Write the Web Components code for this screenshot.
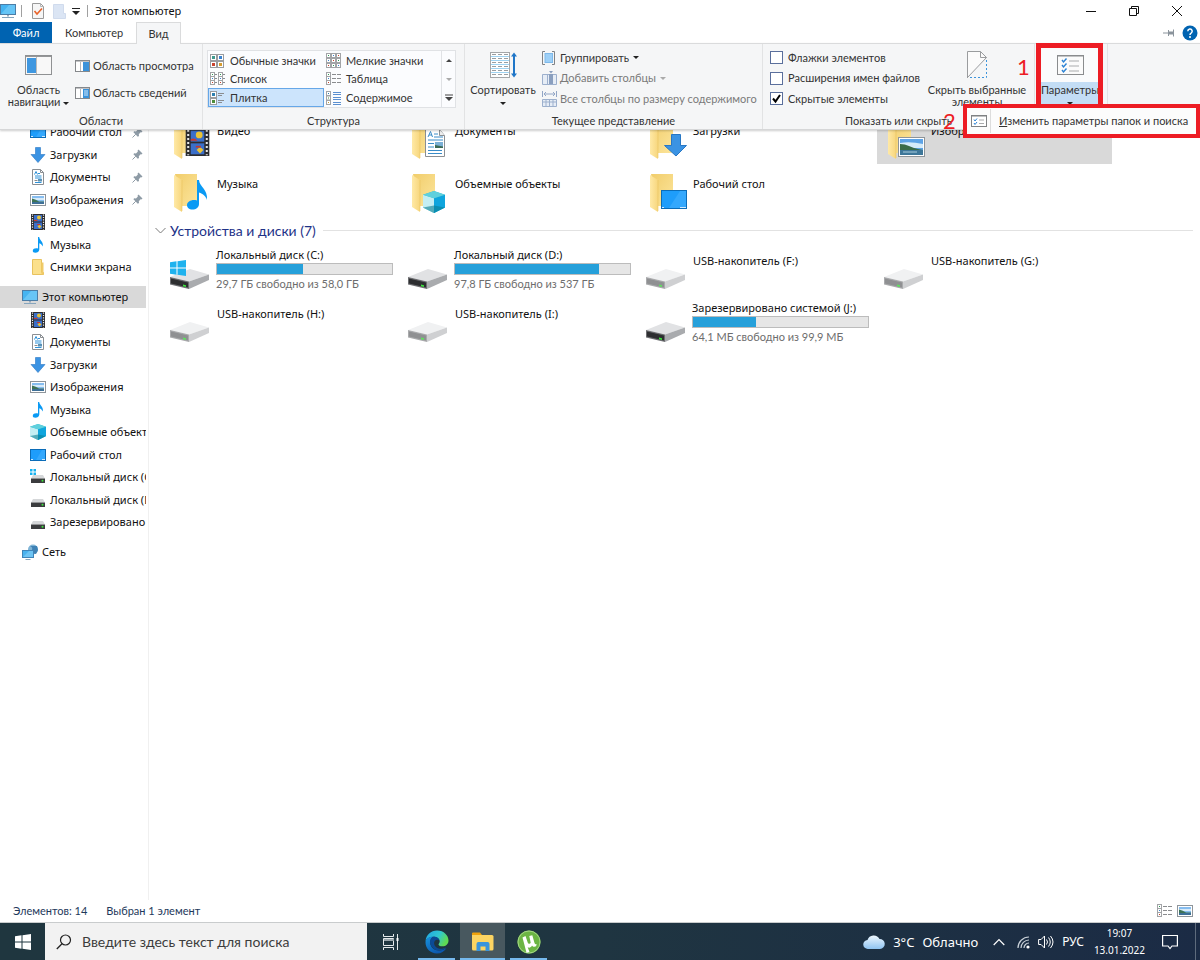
<!DOCTYPE html>
<html lang="ru">
<head>
<meta charset="utf-8">
<title>Этот компьютер</title>
<style>
html, body { margin: 0; min-height: 100%; }
body { font: 11px/16px "Noto Sans", "Open Sans", sans-serif; color: #111; background: #fff; }
</style>
</head>
<body>
<explorer-window></explorer-window>
<script>
const base = `*{box-sizing:border-box}button{font:inherit;color:inherit;border:0;background:none;padding:0;margin:0;cursor:default}a{color:inherit;text-decoration:none}`;
function define(name, css, html) {
  const t = document.createElement('template');
  customElements.define(name, class extends HTMLElement {
    constructor() {
      super();
      this.attachShadow({ mode: 'open' });
    }
    connectedCallback() {
      if (this.shadowRoot.childNodes.length) return;
      t.innerHTML = `<style>${base}${css}</style>` + (typeof html === 'function' ? html(this) : html);
      this.shadowRoot.append(t.content.cloneNode(true));
    }
  });
}

/* ---------- icons ---------- */
const folder = `<defs><linearGradient id="fb" x1="0" y1="0" x2="1" y2="1"><stop offset="0" stop-color="#f1cd6b"/><stop offset="1" stop-color="#fce59c"/></linearGradient><linearGradient id="ff" x1="0" y1="0" x2="1" y2="0"><stop offset="0" stop-color="#ffe9a6"/><stop offset="1" stop-color="#f7d67d"/></linearGradient></defs><path d="M9 9h22v30a2 2 0 0 1-2 2H14z" fill="url(#fb)"/><path d="M8 10l8 5v32L8 42z" fill="url(#ff)"/><path d="M16 15v31" stroke="#eac45f" stroke-width=".6"/>`;
const drive = (a, b, c, d, e) => `<path d="M4 33L24 25L43 30.500L23 37.500z" fill="${a}"/><path d="M23 37.500L43 30.500v5.500L23 45z" fill="${b}"/><path d="M4 33L23 37.500v7.500L4 40.500z" fill="${c}"/><path d="M5 34.500L22 38.500v5L5 39.500z" fill="${d}"/><path d="M17 40.500l3 .700v1.800l-3-.700z" fill="${e}"/>`;
const darkDrive = drive('#e1e2e4', '#a9abae', '#6c6d70', '#2d2e30', '#3be23b');
const usbDrive = drive('#f0f1f2', '#cfd0d2', '#a9aaac', '#8f9092', '#5ee35e');
const cube = `<path d="M8 0L16 2.800V12L8 16L0 12V2.800z" fill="#2fb9cf"/><path d="M0 2.800L8 5.200V16L0 12z" fill="#c4eef3"/><path d="M8 5.200L16 2.800V12L8 16z" fill="#0fa5dd"/><path d="M0 2.800L8 0l8 2.800L8 5.200z" fill="#5fd0dd"/><path d="M8 10.500l8 1.500-8 4-8-4z" fill="#087f95" opacity=".6"/>`;
const desktop = `<rect x=".5" y="2.500" width="15" height="11" fill="#1e9dfb" stroke="#0b6cb8"/><path d="M6 13L12 3h3v10z" fill="#4ab4ff" opacity=".5"/><path d="M1 12.500h2M12 12.500h3" stroke="#cfe9ff"/>`;
const photo = `<rect x=".5" y="2.500" width="15" height="11" fill="#fff" stroke="#8e959b"/><rect x="2" y="4" width="12" height="8" fill="#86bdf0"/><path d="M2 6h12v2H2z" fill="#d7ebfa"/><path d="M2 6.500q4 1 7 3h5v1H2z" fill="#3e7356"/><path d="M2 10h12v2H2z" fill="#3d6f97"/>`;
const note = `<path d="M8 0h1.200c.4 3.500 4.500 4.500 3.600 9.500C12 8 11 6.800 9.300 6.200V12.500c0 2-2 3.300-4 3.300-1.700 0-2.700-1-2.500-2.300.3-1.600 2.500-2.700 5.200-1.900z" fill="#0a9af4"/>`;
const arrow = `<path d="M5.500 .500h5v7H15L8 15.500L1 7.500h4.500z" fill="#3b93e3" stroke="#2877c4" stroke-width=".6"/>`;
const film = `<rect x="1" y="0" width="14" height="16" fill="#2c2d30"/><rect x="4" y="1" width="8" height="6.500" fill="#3b6fc9"/><rect x="4" y="8.500" width="8" height="6.500" fill="#3b6fc9"/><path d="M2.500 .500v15M13.500 .500v15" stroke="#e8e8e8" stroke-width="1.200" stroke-dasharray="1.200 1.200"/><circle cx="9" cy="3.500" r="2" fill="#eac335"/><path d="M4 6q2-1 4 1H4z" fill="#c7382f"/><path d="M7.500 12.500q2-3 4 0l-2 2z" fill="#eac335"/><path d="M7 10h3v1H7z" fill="#c7382f"/>`;
const doc = `<path d="M2.500 .500h8l3 3v12h-11z" fill="#fff" stroke="#8b8f93"/><path d="M10.500 .500v3h3" fill="none" stroke="#8b8f93"/><path d="M4.500 5.500l1.500-3 1.500 3M8 4.500h2M5 7h6.500M5 9h6.500M5 13.500h6.500" stroke="#2e92d8" fill="none"/><rect x="8" y="10" width="4" height="2.500" fill="#5b91b5"/><path d="M4.500 11.500h3" stroke="#888"/>`;
const pc = `<rect x=".5" y="1.500" width="15" height="10" fill="#45b4f1" stroke="#4c7da6"/><path d="M1 11L9 2h6v9z" fill="#7fd0fa" opacity=".6"/><path d="M7 12h2v1.500H7z" fill="#9ab"/><path d="M2 14.500h12" stroke="#86a5bd"/>`;
const windows = `<path d="M0 2.200L6.500 1.300V7.600H0zM7.500 1.200L16 0v7.600H7.500zM0 8.500h6.500v6.200L0 13.800zM7.500 8.500H16V16l-8.500-1.200z"`;
const smallDrive = (y) => `<path d="M3 ${y}h10l2 3.500H1z" fill="#d5d7d9"/><rect x="1" y="${y + 3.5}" width="14" height="4.500" fill="#3b3c3e"/><circle cx="12.500" cy="${y + 5.800}" r="1" fill="#3be23b"/>`;
const cell = (x, y, c) => `<rect x="${x + .5}" y="${y + .5}" width="6" height="6" fill="#fff" stroke="#9a9c9f"/><rect x="${x + 2}" y="${y + 2}" width="3" height="3" fill="${c}"/>`;
const tiny = (x, y, c) => `<rect x="${x + .5}" y="${y + .5}" width="4" height="4" fill="#fff" stroke="#a2a4a7"/><rect x="${x + 2}" y="${y + 2}" width="1" height="1" fill="${c}"/>`;
const placed = (s, x, y, w) => `<svg x="${x}" y="${y}" width="${w}" height="${w}" viewBox="0 0 16 16">${s}</svg>`;
const tri = (c) => `<path d="M0 1h6L3 4z" fill="${c}"/>`;
const ICONS = {
  pc: [16, 16, pc], desktop: [16, 16, desktop], photo: [16, 16, photo], note: [16, 16, note], arrow: [16, 16, arrow], film: [16, 16, film], doc: [16, 16, doc], cube: [16, 16, cube],
  folder: [16, 16, `<path d="M2.500 .500h9v13h2v2h-11z" fill="#fbe08c" stroke="#e8c25e"/><path d="M11.500 3.500h2v12h-2z" fill="#f0cb68"/>`],
  network: [16, 16, `<circle cx="11" cy="5.500" r="5" fill="#7fb4d6"/><path d="M8 2q3 1 2 4t4 4l2-4-1-4z" fill="#3f82b5"/><rect x=".5" y="6.500" width="11" height="7" fill="#49b2ee" stroke="#3f84b8"/><path d="M1 13L7 7h4v6z" fill="#86d0f8" opacity=".6"/><path d="M3.500 15.500h5" stroke="#86a5bd"/>`],
  driveC: [16, 16, `<path d="M0 0h2.500v2.500H0zM3.500 0H6v2.500H3.500zM0 3.500h2.500V6H0zM3.500 3.500H6V6H3.500z" fill="#16b1ef"/>` + smallDrive(6)],
  drive: [16, 16, smallDrive(7)],
  pin: [11, 11, `<path d="M6.500 .500L10.500 4.500L9.300 5.500L8.600 5.200L6.800 7.200L7 9L5.800 9.800L1.400 5.300L2.200 4.200L4 4.400L5.900 2.500L5.500 1.700z" fill="#8e9ba6"/><path d="M3.800 7.200L.500 10.500" stroke="#8e9ba6"/>`],
  tFilm: [48, 48, folder + placed(film, 18, 17, 27)],
  tDoc: [48, 48, folder + `<g transform="translate(1 8)"><path d="M20.500 9.500h14l5 6v21h-19z" fill="#fff" stroke="#8b8f93"/><path d="M34.500 9.500v6h5" fill="#eee" stroke="#8b8f93"/><path d="M23 17l2.500-5.500L27.500 17M24 15h3M29 14h4M29 17h9M23 20h15M23 23.500h6M23 27h6M23 30.500h14M23 33.500h14" stroke="#3a8cc8" fill="none"/><path d="M30 22h8v6h-8z" fill="#7bb0d6"/><path d="M30 28v-3l8 1.500V28z" fill="#3b6a55"/></g>`],
  tArrow: [48, 48, folder + `<path d="M29.500 22.500h9v11h6L34 44L22.500 33.500h7z" fill="#3b93e3" stroke="#2877c4"/>`],
  tPhoto: [48, 48, folder + `<g transform="translate(1 8)"><rect x="17.500" y="17.500" width="26" height="19" fill="#fff" stroke="#8e9499"/><rect x="19" y="19" width="23" height="16" fill="#5da3e6"/><path d="M19 23q10-2 23 1v4H19z" fill="#d5ebfa"/><path d="M19 24q5 0 9 2t9 3l5 1H19z" fill="#3a6b48"/><path d="M19 30h23v5H19z" fill="#3e7799"/><path d="M22 32h14" stroke="#a9cddd"/></g>`],
  tNote: [48, 48, folder + `<path d="M31 15h2c.5 7 9 9 8 20-.8-3-4-6.500-8-7.500V39c0 3.500-3 5.500-6.500 5.500S21 42.500 21 40c0-3.500 5-6 10-4.500z" fill="#0a9af4"/>`],
  tCube: [48, 48, folder + placed(cube, 19, 26, 22)],
  tDesk: [48, 48, folder + `<rect x="19.500" y="25.500" width="25" height="18" fill="#1e9dfb" stroke="#0b6cb8"/><path d="M27 43L38 26h6v17z" fill="#4ab4ff" opacity=".5"/><path d="M20 42.500h2M38 42.500h6" stroke="#cfe9ff"/>`],
  tDriveC: [48, 48, darkDrive + placed(windows + ' fill="#1eb2ee"/>', 4, 16, 16)],
  tDrive: [48, 48, darkDrive], tUsb: [48, 48, usbDrive],
  qcheck: [12, 16, `<path d="M.500 .500h8l3 3v12H.500z" fill="#f6f6f6" stroke="#9a9a9a"/><path d="M8.500 .500v3h3" fill="none" stroke="#b5b5b5"/><path d="M2.500 8l2.500 3L10 5.500" fill="none" stroke="#e8632a" stroke-width="1.600"/>`],
  qfolder: [13, 15, `<path d="M.5 .500h10v9h2v5H.5z" fill="#dbe5f4" stroke="#d0dbed"/>`],
  qmore: [8, 8, `<path d="M0 1.500h8" stroke="#222"/><path d="M0 4h8L4 8z" fill="#222"/>`],
  min: [10, 10, `<path d="M0 5.500h10" stroke="#111"/>`],
  restore: [10, 10, `<path d="M.5 2.500h7v7h-7zM2.500 2.500v-2h7v7h-2" fill="none" stroke="#111"/>`],
  close: [10, 10, `<path d="M0 0L10 10M10 0L0 10" stroke="#111"/>`],
  pushpin: [12, 8, `<path d="M0 4h5M5.500 1v6M10.500 0.500v7" stroke="#8b949c"/><path d="M5 2.500h6v3H5z" fill="#8b949c"/>`],
  help: [16, 16, `<circle cx="8" cy="8" r="7.500" fill="#0063b1"/><path d="M5.800 6.200a2.200 2.200 0 1 1 3.300 1.900Q8 8.700 8 10" fill="none" stroke="#fff" stroke-width="1.500"/><circle cx="8" cy="12" r="1" fill="#fff"/>`],
  navPane: [27, 20, `<rect x=".5" y=".5" width="26" height="19" fill="#f8f8f8" stroke="#8f9193"/><path d="M.5 1.200h26" stroke="#8f9193" stroke-width="1.500"/><path d="M2 3h9v15H2z" fill="#3f97e0"/><path d="M11.500 2v17" stroke="#bbb"/>`],
  preview: [15, 12, `<rect x=".5" y=".5" width="14" height="11" fill="#fff" stroke="#85888b"/><path d="M0 1h15" stroke="#85888b"/><path d="M5.500 2v9" stroke="#b5b7b9"/><path d="M8 2h6v9H8z" fill="#3a92da"/>`],
  details: [15, 12, `<rect x=".5" y=".5" width="14" height="11" fill="#fff" stroke="#85888b"/><path d="M0 1h15" stroke="#85888b"/><path d="M5.500 2v9" stroke="#b5b7b9"/><path d="M8 2h6v9H8z" fill="#3a92da"/><path d="M9 4h4M9 6h4M9 8h4" stroke="#d2e9fb"/>`],
  vMedium: [15, 14, cell(0, 0, '#3e9a8f') + cell(7, 0, '#3b83d0') + cell(0, 7, '#c9432f') + cell(7, 7, '#d69c2f')],
  vSmall: [15, 15, [0, 5, 10].map((y, j) => [0, 5, 10].map((x, i) => tiny(x, y, ['#2d9c55', '#3b83d0', '#c9432f'][(i + j) % 3])).join('')).join('')],
  vList: [15, 14, [0, 4, 8].map((y, j) => [0, 8].map(x => tiny(x, y, ['#2d9c55', '#3b83d0', '#c9432f'][j]) + `<path d="M${x + 5} ${y + 2.5}h2" stroke="#8a8c8f"/>`).join('')).join('')],
  vTable: [15, 14, [0, 4, 8].map((y, j) => tiny(0, y, ['#2d9c55', '#3b83d0', '#c9432f'][j]) + `<path d="M6 ${y + 2.5}h4M11 ${y + 2.5}h4" stroke="#8a8c8f"/>`).join('')],
  vTile: [15, 14, cell(0, 0, '#2d7fb0') + cell(0, 7, '#4c8d3a') + `<path d="M8 2.500h6M8 4.500h4M8 9.500h6M8 11.500h4" stroke="#8a8c8f"/>`],
  vContent: [15, 14, [0, 4.500, 9].map((y, j) => tiny(0, y, ['#2d7fb0', '#4c8d3a', '#c99a2f'][j])).join('') + `<path d="M7 1.500h8M7 3.500h8M7 6.500h8M7 8.500h8M7 11.500h8M7 13.500h8" stroke="#5b8fd0"/>`],
  sort: [27, 28, `<rect x=".5" y="1.500" width="19" height="25" fill="#fff" stroke="#a5a7a9"/><path d="M1 5.500h18M1 9.500h18M1 13.500h18M1 17.500h18M1 21.500h18" stroke="#9fd3f2"/><path d="M2 3.500h16M2 7.500h16M2 11.500h16M2 15.500h16M2 19.500h16M2 23.500h16" stroke="#9a9ea1" stroke-dasharray="4 2"/><path d="M24 3v22" stroke="#1f76c8" stroke-width="2"/><path d="M21 5.500L24 1.500L27 5.500zM21 22.500L24 26.500L27 22.500z" fill="#1f76c8"/>`],
  group: [15, 14, `<path d="M3 .500H.500v13H3M10 .500h2.500v13H10" fill="none" stroke="#808386"/><rect x="3" y="2.500" width="7.500" height="9" fill="#9ed0f7" stroke="#7eb9ea"/>`],
  addCol: [15, 14, `<path d="M.500 3.500h14v10H.500zM5.500 3.500v10M10.500 3.500v10" fill="#e6edf6" stroke="#9db0cd"/><path d="M7 3h4v10H7z" fill="#8a9fbf"/><path d="M7 0h4L9 2.500z" fill="#8a9fbf"/>`],
  fitCol: [15, 16, `<path d="M.500 0v6M14.500 0v6M2 3h11M4 1L2 3l2 2M11 1l2 2-2 2" fill="none" stroke="#92a6c6"/><path d="M.500 8.500h14v7H.500zM.500 11h14M4 8.500v7M7.500 8.500v7M11 8.500v7" fill="#e6edf6" stroke="#9db0cd"/>`],
  hide: [20, 28, `<path d="M19 7L1 26.500V.500h12z" fill="#fbfbfb"/><path d="M.500 27V.500h13l6 6L.500 26.500" fill="none" stroke="#9a9c9e"/><path d="M13.500 .500v6h6" fill="none" stroke="#9a9c9e"/><path d="M19.500 9v17.500H2" fill="none" stroke="#3d94dc" stroke-dasharray="2 2"/>`],
  options: [27, 20, `<rect x=".5" y=".5" width="26" height="19" fill="#fbfbfb" stroke="#8a8c8e"/><path d="M0 1h27" stroke="#8a8c8e"/><path d="M12 6h10M12 11h10M12 16h10" stroke="#a9abad"/><path d="M5 5l1.500 2L9.500 3.500M5 10l1.500 2L9.500 8.500M5 15l1.500 2L9.500 13.500" fill="none" stroke="#2b82d4" stroke-width="1.400"/>`],
  optionsS: [16, 12, `<rect x=".5" y=".5" width="15" height="11" fill="#fff" stroke="#808284"/><path d="M0 1h16" stroke="#808284"/><path d="M8 5h5M8 8.500h5" stroke="#a9abad"/><path d="M3 4.500l1 1.500L6 3.500M3 8l1 1.500L6 7" fill="none" stroke="#2b82d4"/>`],
  down: [6, 5, tri('#222')], downDim: [6, 5, tri('#aaa')],
  up: [6, 5, `<path d="M0 4h6L3 1z" fill="#444"/>`],
  expand: [8, 8, `<path d="M0 1h8" stroke="#444"/><path d="M0 3h8L4 7z" fill="#444"/>`],
  chev: [11, 8, `<path d="M.500 1l5 5 5-5" fill="none" stroke="#7b7b7b"/>`],
  start: [16, 16, windows + ' fill="#fff"/>'],
  search: [16, 16, `<circle cx="9.500" cy="6" r="5" fill="none" stroke="#222" stroke-width="1.200"/><path d="M6 9.800L.800 15" stroke="#222" stroke-width="1.300"/>`],
  taskview: [16, 16, `<path d="M.500 0v2.500h10V0M.500 16v-2.500h10V16M.500 4.500h10v7H.500zM14.500 0v4M14.500 7v9" fill="none" stroke="#e6eaec"/><rect x="13.500" y="4" width="2" height="3" fill="#fff"/><path d="M1 5h10v2H1z" fill="#9aa6ac"/>`],
  edge: [24, 24, `<defs><linearGradient id="e1" x1="0" y1="0" x2="1" y2=".4"><stop offset="0" stop-color="#1fa4e8"/><stop offset=".6" stop-color="#30c7d0"/><stop offset="1" stop-color="#5fdb53"/></linearGradient><linearGradient id="e2" x1="0" y1="0" x2=".6" y2="1"><stop offset="0" stop-color="#1793df"/><stop offset="1" stop-color="#0c56ad"/></linearGradient></defs><path d="M.600 11C1 5 6 .500 12 .500c7 0 11.500 5 11.500 10 0 3.500-2.600 5.800-6 5.800-2.800 0-4-1-4-1.800 0-.8 1.200-1.200 1.200-3 0-2.500-2.500-4.700-6-4.700C4.500 6.800 1.500 8.500.600 11z" fill="url(#e1)"/><path d="M.500 12C.700 8.500 4 6.800 8 6.800c-2 1.500-3 4-2.800 6.200.3 4 3.800 7.500 8.800 7.500 3 0 5.500-1 7.500-2.500C19.500 21.500 16 23.500 12 23.500 5.500 23.500.300 18.500.500 12z" fill="url(#e2)"/><path d="M8 6.800c3.600-.3 6.700 1.700 6.700 4.700 0-1.500-2-2.200-3.700-1.500-2.500 1-2.700 5 .5 7.500 3 2 7 1.500 9.500-.5-2 4-9 5-13 1-4-3.700-4-8.700 0-11.200z" fill="#0b4a96"/>`],
  files: [22, 20, `<path d="M0 1.500A1 1 0 0 1 1 .500h7l2 2.500H0z" fill="#f0a20c"/><path d="M0 3h20a1.500 1.500 0 0 1 1.500 1.500V17A1.500 1.500 0 0 1 20 18.500H1.500A1.500 1.500 0 0 1 0 17z" fill="#fcd462"/><path d="M4.500 12a2 2 0 0 1 2-2h9a2 2 0 0 1 2 2v7h-4v-4.500h-5V19h-4z" fill="#3a94dc"/>`],
  torrent: [24, 24, `<circle cx="12" cy="12" r="11.500" fill="#6cb544"/><circle cx="12" cy="12" r="11" fill="none" stroke="#a4d587" stroke-width="1"/><path d="M5.500 7.500L8.500 6l2.200 6.500c.6 1.600 2.500 1.700 3 .2L12.300 6l3-.8L17.500 13c.4 1.200 1.200 1.500 2.200 1l-.6 2.300c-1.700.9-3.300.5-4.100-.8-.8 2-2.900 2.700-4.300 1.700L12.500 22l-3 .8z" fill="#fff"/>`],
  cloud: [22, 16, `<defs><linearGradient id="cl" x1="0" y1="0" x2="0" y2="1"><stop offset="0" stop-color="#eef7fe"/><stop offset="1" stop-color="#8fc4f2"/></linearGradient></defs><path d="M5 15a4.500 4.500 0 0 1-.5-9A6.500 6.500 0 0 1 16.500 5a5 5 0 0 1 .5 10z" fill="url(#cl)"/>`],
  chevUp: [12, 8, `<path d="M.700 7L6 1.500L11.300 7" fill="none" stroke="#fff" stroke-width="1.200"/>`],
  wifi: [13, 14, `<path d="M1 13A11 11 0 0 1 12 2M4 13a8 8 0 0 1 8-8M7 13a5 5 0 0 1 5-5" fill="none" stroke="#c9d1d8" stroke-width="1.200"/><circle cx="11" cy="12" r="1.600" fill="#fff"/>`],
  sound: [16, 14, `<path d="M.600 4.500h2.500L6.500 1v12L3.100 9.500H.600z" fill="none" stroke="#fff"/><path d="M8.500 4.500q2 2.500 0 5M10.500 2.500q3.500 4.500 0 9M12.500 1q5 6 0 12" fill="none" stroke="#fff"/>`],
  notice: [16, 16, `<path d="M.600 1.500h14.800v10.500H10L8 14.500L6 12H.600z" fill="none" stroke="#fff" stroke-width="1.200"/>`]
};
define('x-icon', `:host{display:inline-flex;flex:none}svg{display:block}`, el => {
  const [w, h, s] = ICONS[el.getAttribute('name')];
  return `<svg width="${w}" height="${h}" viewBox="0 0 ${w} ${h}" aria-hidden="true">${s}</svg>`;
});

/* ---------- title bar ---------- */
define('title-bar', `
:host{display:flex;align-items:center;height:22px}
.q{display:flex;align-items:center;height:22px}
.q button{display:flex}
.sep{width:1px;height:12px;background:#a0a0a0}
.a{margin:0 10px 0 5px}.b{margin-left:9px}.c{margin:0 7px 0 6px}.d{margin-right:7px}
h1{font:inherit;margin:0;flex:1}
.w{display:flex;padding-right:2px}
.w button{width:43px;height:20px;display:flex;align-items:center;justify-content:center}`,
`<div class="q"><x-icon name="pc"></x-icon><span class="sep a"></span>
<button aria-label="Свойства"><x-icon name="qcheck"></x-icon></button>
<button class="b" aria-label="Новая папка"><x-icon name="qfolder"></x-icon></button>
<button class="c" aria-label="Настройка панели"><x-icon name="qmore"></x-icon></button><span class="sep d"></span></div>
<h1>Этот компьютер</h1>
<div class="w"><button aria-label="Свернуть"><x-icon name="min"></x-icon></button><button aria-label="Восстановить"><x-icon name="restore"></x-icon></button><button aria-label="Закрыть"><x-icon name="close"></x-icon></button></div>`);

define('ribbon-tabs', `
:host{display:flex;height:21px;font-family:Lato,"Noto Sans",sans-serif;color:#333}
button{height:22px;padding:0 13px}
.file{width:52px;padding:0;background:#0063b1;color:#fff}
.on{width:45px;padding:0;background:#f5f6f7;border:1px solid #dadbdc;border-bottom:0;position:relative;z-index:3}
.r{margin-left:auto;display:flex;align-items:center;gap:7px;padding-right:2px}
.r button{padding:0;display:flex;align-items:center}`,
`<button class="file">Файл</button><button>Компьютер</button><button class="on">Вид</button>
<div class="r"><button aria-label="Закрепить ленту"><x-icon name="pushpin"></x-icon></button><button aria-label="Справка"><x-icon name="help"></x-icon></button></div>`);

/* ---------- ribbon ---------- */
define('ribbon-group', `
:host{display:grid;grid-template-rows:1fr 16px;position:relative;border-right:1px solid #e2e3e4;flex:none}
.body{display:flex;min-height:0}
.label{text-align:center;line-height:16px;white-space:nowrap}`,
el => `<div class="body"><slot></slot></div><div class="label">${el.getAttribute('label') || ''}</div>`);

define('big-button', `
:host{display:block}
button{width:100%;height:65px;padding-top:7px;display:flex;flex-direction:column;align-items:center;line-height:12px;white-space:nowrap}
.i{height:28px;margin-bottom:5px;display:flex;align-items:center}
.l{display:block;text-align:center}
::slotted(x-icon){vertical-align:middle}`,
el => `<button><span class="i"><x-icon name="${el.getAttribute('icon')}"></x-icon></span><span class="l"><slot></slot></span></button>`);

define('small-button', `
:host{display:block}
button{display:flex;align-items:center;height:100%;white-space:nowrap}
.i{width:18px;display:flex}
.c{margin-left:4px}
:host([off]){color:#7a7a7a}`,
el => `<button${el.hasAttribute('off') ? ' disabled' : ''}><span class="i"><x-icon name="${el.getAttribute('icon')}"></x-icon></span><slot></slot>${el.hasAttribute('menu') ? `<x-icon class="c" name="${el.hasAttribute('off') ? 'downDim' : 'down'}"></x-icon>` : ''}</button>`);

define('view-gallery', `
:host{display:grid;grid-template-columns:116px 117px 14px;grid-template-rows:19px 18px 19px;border:1px solid #e0e2e5;background:#fbfcfe;align-self:start}
button{display:flex;align-items:center;padding-left:2px;white-space:nowrap;text-align:left}
button span{width:20px;display:flex}
.on{background:#cce4fc;border:1px solid #66a7e8;padding-left:1px}
.s{padding:0;justify-content:center;border-left:1px solid #e0e2e5}`,
`<button><span><x-icon name="vMedium"></x-icon></span>Обычные значки</button><button><span><x-icon name="vSmall"></x-icon></span>Мелкие значки</button><button class="s" aria-label="Вверх"><x-icon name="up"></x-icon></button>
<button><span><x-icon name="vList"></x-icon></span>Список</button><button><span><x-icon name="vTable"></x-icon></span>Таблица</button><button class="s" aria-label="Вниз"><x-icon name="downDim"></x-icon></button>
<button class="on"><span><x-icon name="vTile"></x-icon></span>Плитка</button><button><span><x-icon name="vContent"></x-icon></span>Содержимое</button><button class="s" aria-label="Ещё"><x-icon name="expand"></x-icon></button>`);

define('check-box', `
:host{display:block}
label{display:flex;align-items:center;height:100%;gap:5px;white-space:nowrap}
input{appearance:none;width:13px;height:13px;margin:0;border:1px solid #5a6f9c;background:#fff}
input:checked{background:#fff url('data:image/svg+xml,<svg xmlns="http://www.w3.org/2000/svg" viewBox="0 0 11 11"><path d="M2 5.500l2.500 3L9 2" fill="none" stroke="black" stroke-width="2"/></svg>')}`,
el => `<label><input type="checkbox"${el.hasAttribute('checked') ? ' checked' : ''}><span><slot></slot></span></label>`);

define('options-menu', `
:host{display:block;background:#fcfcfc;border:4px solid #ed1c24}
a{display:flex;align-items:center;height:26px;padding-left:4px;white-space:nowrap}
i{width:1px;height:24px;background:#ddd;margin:0 8px 0 3px}`,
`<a href="#options"><x-icon name="optionsS"></x-icon><i></i><span><u>И</u>зменить параметры папок и поиска</span></a>`);

define('ribbon-bar', `
:host{display:flex;height:87px;background:#f5f6f7;border-top:1px solid #dadbdc;border-bottom:1px solid #d6d7d8;box-shadow:0 1px 2px #0003;position:relative;z-index:2;font-family:Lato,"Noto Sans",sans-serif;color:#333}
.g1{width:203px}.g2{width:262px}.g3{width:298px}.g4{width:272px}.g5{width:73px}
.nav{width:69px;margin:0 2px 0 4px}
.two{display:grid;grid-template-rows:27px 27px;padding-top:8px;align-content:start}
.three{display:grid;grid-template-rows:21px 20px 21px;padding-top:3px;align-content:start}
view-gallery{margin:6px 0 0 4px}
.sort{width:66px;margin:0 6px 0 5px}
.checks{padding-left:7px;width:158px}
.hide{width:112px}
.params{width:60px;height:61px;margin:0 0 0 5px;background:linear-gradient(#fafbfc 38px,#c3ddf5 38px)}
.frame{position:absolute;left:1px;top:-1px;width:67px;height:67px;border:5px solid #ed1c24;pointer-events:none}
options-menu{position:absolute;left:-72px;top:60px;width:237px}
.num{position:absolute;font-size:22px;line-height:24px;color:#ed1c24}
.n1{left:-18px;top:11px}.n2{left:-92px;top:65px}`,
`<ribbon-group class="g1" label="Области"><big-button class="nav" icon="navPane">Область<br>навигации <x-icon name="down"></x-icon></big-button>
<div class="two"><small-button icon="preview">Область просмотра</small-button><small-button icon="details">Область сведений</small-button></div></ribbon-group>
<ribbon-group class="g2" label="Структура"><view-gallery></view-gallery></ribbon-group>
<ribbon-group class="g3" label="Текущее представление"><big-button class="sort" icon="sort">Сортировать<br><x-icon name="down"></x-icon></big-button>
<div class="three"><small-button icon="group" menu>Группировать</small-button><small-button icon="addCol" menu off>Добавить столбцы</small-button><small-button icon="fitCol" off>Все столбцы по размеру содержимого</small-button></div></ribbon-group>
<ribbon-group class="g4" label="Показать или скрыть"><div class="checks three"><check-box>Флажки элементов</check-box><check-box>Расширения имен файлов</check-box><check-box checked>Скрытые элементы</check-box></div>
<big-button class="hide" icon="hide">Скрыть выбранные<br>элементы</big-button></ribbon-group>
<ribbon-group class="g5"><big-button class="params" icon="options">Параметры<br><x-icon name="down"></x-icon></big-button>
<span class="frame"></span><options-menu></options-menu><span class="num n1">1</span><span class="num n2">2</span></ribbon-group>`);

/* ---------- navigation pane ---------- */
define('nav-item', `
:host{display:block;min-width:0}
a{display:flex;align-items:center;height:100%;padding-left:30px;white-space:nowrap;overflow:hidden}
:host([root]) a{padding-left:22px}
:host([current]) a{background:#d9d9d9}
.i{margin-right:4px}
.p{margin-left:auto;padding-right:3px;display:flex}`,
el => `<a href="#${el.getAttribute('icon')}"><x-icon class="i" name="${el.getAttribute('icon')}"></x-icon><slot></slot>${el.hasAttribute('pinned') ? '<span class="p"><x-icon name="pin"></x-icon></span>' : ''}</a>`);

define('nav-pane', `
:host{display:block;width:149px;border-right:1px solid #f0f0f0;flex:none;padding-right:2px;box-sizing:border-box;overflow:hidden}
nav{margin-top:-9px}
.s{margin-bottom:8px}
.s nav-item:nth-child(odd){height:22px}
.s nav-item:nth-child(even){height:23px}`,
`<nav><div class="s"><nav-item icon="desktop" pinned>Рабочий стол</nav-item><nav-item icon="arrow" pinned>Загрузки</nav-item><nav-item icon="doc" pinned>Документы</nav-item><nav-item icon="photo" pinned>Изображения</nav-item><nav-item icon="film">Видео</nav-item><nav-item icon="note">Музыка</nav-item><nav-item icon="folder">Снимки экрана</nav-item></div>
<div class="s"><nav-item icon="pc" root current>Этот компьютер</nav-item><nav-item icon="film">Видео</nav-item><nav-item icon="doc">Документы</nav-item><nav-item icon="arrow">Загрузки</nav-item><nav-item icon="photo">Изображения</nav-item><nav-item icon="note">Музыка</nav-item><nav-item icon="cube">Объемные объекты</nav-item><nav-item icon="desktop">Рабочий стол</nav-item><nav-item icon="driveC">Локальный диск (C:)</nav-item><nav-item icon="drive">Локальный диск (D:)</nav-item><nav-item icon="drive">Зарезервировано системой (J:)</nav-item></div>
<div class="s"><nav-item icon="network" root>Сеть</nav-item></div></nav>`);

/* ---------- files ---------- */
define('file-tile', `
:host{display:flex;height:52px;padding-left:3px;gap:3px}
:host([selected]){background:#d9d9d9}
.t{padding-top:10px;line-height:18px}
:host([usb]) .t{padding-top:8px}`,
el => `<x-icon name="${el.getAttribute('icon')}"></x-icon><div class="t"><slot></slot></div>`);

define('drive-tile', `
:host{display:flex;height:52px;padding-left:3px;gap:2px}
.t{padding-top:3px;width:177px}
progress{display:block;appearance:none;width:177px;height:12px;border:1px solid #bcbcbc;background:#e6e6e6}
progress::-webkit-progress-bar{background:#e6e6e6}
progress::-webkit-progress-value{background:#26a0da}
.f{font-family:Lato,"Noto Sans",sans-serif;line-height:18px;color:#6d6d6d;white-space:nowrap}`,
el => `<x-icon name="${el.getAttribute('icon')}"></x-icon><div class="t"><slot></slot><progress max="100" value="${el.getAttribute('used')}" aria-label="Занято"></progress><div class="f">${el.getAttribute('free')}</div></div>`);

define('file-view', `
:host{display:block;flex:1;min-width:0;padding:0 7px 0 6px}
section{margin-top:-18px}
.grid{display:grid;grid-template-columns:repeat(auto-fill,235px);gap:1px 3px;padding-left:8px}
h2{display:flex;align-items:center;height:27px;margin:0;font:14px/20px Lato,"Noto Sans",sans-serif;color:#1e3287;gap:4px;white-space:nowrap}
h2::after{content:"";flex:1;height:1px;background:#e2e2e2;margin-left:3px}`,
`<section><div class="grid"><file-tile icon="tFilm">Видео</file-tile><file-tile icon="tDoc">Документы</file-tile><file-tile icon="tArrow">Загрузки</file-tile><file-tile icon="tPhoto" selected>Изображения</file-tile><file-tile icon="tNote">Музыка</file-tile><file-tile icon="tCube">Объемные объекты</file-tile><file-tile icon="tDesk">Рабочий стол</file-tile></div>
<h2><x-icon name="chev"></x-icon>Устройства и диски (7)</h2>
<div class="grid"><drive-tile icon="tDriveC" used="49" free="29,7 ГБ свободно из 58,0 ГБ">Локальный диск (C:)</drive-tile><drive-tile icon="tDrive" used="82" free="97,8 ГБ свободно из 537 ГБ">Локальный диск (D:)</drive-tile><file-tile usb icon="tUsb">USB-накопитель (F:)</file-tile><file-tile usb icon="tUsb">USB-накопитель (G:)</file-tile><file-tile usb icon="tUsb">USB-накопитель (H:)</file-tile><file-tile usb icon="tUsb">USB-накопитель (I:)</file-tile><drive-tile icon="tDrive" used="36" free="64,1 МБ свободно из 99,9 МБ">Зарезервировано системой (J:)</drive-tile></div></section>`);

/* ---------- bottom bars ---------- */
define('status-bar', `
:host{display:flex;align-items:center;height:22px;padding:0 7px 0 13px;font-family:Lato,"Noto Sans",sans-serif;line-height:18px;color:#1e395b}
span{margin-right:19px}
.r{margin-left:auto;display:flex;align-items:center;gap:5px}
button{display:flex}`,
`<span>Элементов: 14</span><span>Выбран 1 элемент</span><div class="r"><button aria-label="Таблица"><x-icon name="vTable"></x-icon></button><button aria-label="Эскизы"><x-icon name="photo"></x-icon></button></div>`);

define('task-bar', `
:host{display:flex;height:38px;border-top:1px solid #c9cccd;background:linear-gradient(90deg,#1f363f,#1f3541 50%,#1b2b45);color:#fff;box-sizing:border-box}
button{display:flex;align-items:center;justify-content:center}
.start{width:45px}
.s{width:322px;background:#f2f2f2;display:flex;align-items:center;padding-left:11px;gap:10px}
input{border:0;background:none;outline:0;padding:0;flex:1;font:14px/20px Lato,"Noto Sans",sans-serif;color:#333}
input::placeholder{color:#3c3c3c;opacity:1}
.apps{display:flex;gap:1px;padding-left:1px}
.apps button{width:45px}
.run{position:relative}
.run::after{content:"";position:absolute;left:4px;right:4px;bottom:0;height:2px;background:#76b9ed}
.apps .on{background:#48585f}
.apps .on::after{left:0;right:0}
.tray{margin-left:auto;display:flex;align-items:center}
.w{font-size:13px;gap:8px;margin-right:15px}
.v{margin-right:12px}.n{margin-right:8px}.k{font-size:12px;margin-right:10px}
.c{flex-direction:column;font-size:10px;line-height:17px;margin-right:17px}
.e{margin-right:17px}
.d{width:5px;align-self:stretch;border-left:1px solid #5e6b7c}`,
`<button class="start" aria-label="Пуск"><x-icon name="start"></x-icon></button>
<label class="s"><x-icon name="search"></x-icon><input type="search" placeholder="Введите здесь текст для поиска" aria-label="Поиск"></label>
<div class="apps"><button aria-label="Представление задач"><x-icon name="taskview"></x-icon></button><button class="run" aria-label="Edge"><x-icon name="edge"></x-icon></button><button class="run on" aria-label="Проводник"><x-icon name="files"></x-icon></button><button class="run" aria-label="Торрент"><x-icon name="torrent"></x-icon></button></div>
<div class="tray"><button class="w"><x-icon name="cloud"></x-icon><span>3°C</span><span>Облачно</span></button><button class="v" aria-label="Значки"><x-icon name="chevUp"></x-icon></button><button class="n" aria-label="Сеть"><x-icon name="wifi"></x-icon></button><button class="n" aria-label="Звук"><x-icon name="sound"></x-icon></button><button class="k">РУС</button><button class="c"><span>19:07</span><span>13.01.2022</span></button><button class="e" aria-label="Уведомления"><x-icon name="notice"></x-icon></button><span class="d"></span></div>`);

define('explorer-window', `
:host{display:flex;flex-direction:column;min-height:100vh}
main{flex:1;display:flex;min-height:0;overflow:hidden}`,
`<title-bar></title-bar><ribbon-tabs></ribbon-tabs><ribbon-bar></ribbon-bar><main><nav-pane></nav-pane><file-view></file-view></main><status-bar></status-bar><task-bar></task-bar>`);
</script>
</body>
</html>
